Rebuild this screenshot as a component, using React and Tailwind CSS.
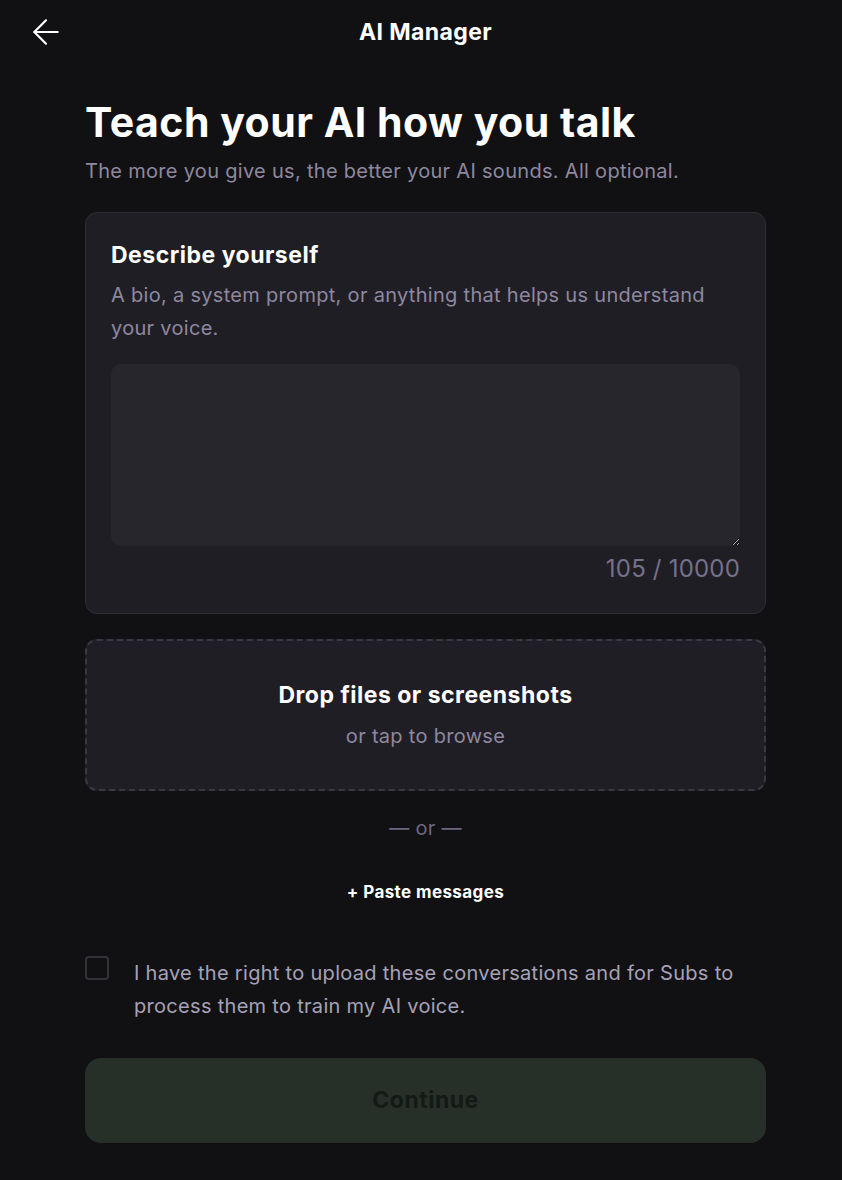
import { ArrowLeft } from 'lucide-react'

export default function App() {
  return (
    <div className="min-h-[1180px] w-full bg-[#111113] text-white font-['Inter',sans-serif]">
      {/* Header */}
      <header className="relative flex h-[64px] items-center justify-center">
        <button className="absolute left-[26px] top-[12px] text-white">
          <ArrowLeft className="h-[40px] w-[40px]" strokeWidth={1.3} />
        </button>
        <h1 className="pl-[9px] text-[23px] font-bold tracking-[0.4px]">AI Manager</h1>
      </header>

      <main className="ml-[85px] w-[681px] pt-[30px]">
        <h2 className="text-[41px] font-bold leading-[56px] tracking-[0.5px]">Teach your AI how you talk</h2>
        <p className="mt-[7px] text-[20px] leading-[28px] tracking-[0.3px] text-[#8e88a0]">
          The more you give us, the better your AI sounds. All optional.
        </p>

        {/* Describe card */}
        <section className="mt-[27px] rounded-[12px] border border-[#2f2e36] bg-[#1f1e24] px-[25px] pt-[27px] pb-[30px]">
          <h3 className="text-[23px] font-bold leading-[30px] tracking-[0.5px]">Describe yourself</h3>
          <p className="mt-[9px] text-[20px] leading-[33px] tracking-[0.3px] text-[#8e88a0]">
            A bio, a system prompt, or anything that helps us understand your voice.
          </p>
          <textarea className="mt-[19px] block h-[182px] w-full resize-y rounded-[10px] bg-[#27262c] p-3 text-white outline-none" />
          <div className="mt-[9px] text-right text-[24px] leading-[28px] tracking-[0.2px] text-[#76718a]">105 / 10000</div>
        </section>

        {/* Drop zone */}
        <section className="mt-[25px] flex h-[152px] flex-col items-center justify-center rounded-[12px] border-2 border-dashed border-[#3a3942] bg-[#1f1e24]">
          <div className="text-[23px] font-bold leading-[30px] tracking-[0.5px]">Drop files or screenshots</div>
          <div className="mt-[12px] text-[20px] leading-[28px] tracking-[0.3px] text-[#8e88a0]">or tap to browse</div>
        </section>

        <div className="mt-[23px] text-center text-[20px] leading-[28px] tracking-[0.3px] text-[#6d6880]">— or —</div>

        <button className="mx-auto mt-[39px] block text-[17px] font-bold leading-[22px] tracking-[0.4px] text-white">+ Paste messages</button>

        {/* Consent */}
        <label className="mt-[54px] flex gap-[25px]">
          <span className="-mt-[1px] h-[24px] w-[24px] shrink-0 rounded-[4px] border-2 border-[#33323a]" />
          <span className="text-[20px] leading-[33px] tracking-[0.3px] text-[#a7a2b8]">
            I have the right to upload these conversations and for Subs to process them to train my AI voice.
          </span>
        </label>

        <button className="mt-[35px] flex h-[85px] w-full items-center justify-center rounded-[16px] bg-[#263029] text-[23px] font-bold tracking-[0.5px] text-[#141916]">
          Continue
        </button>
      </main>
    </div>
  )
}
